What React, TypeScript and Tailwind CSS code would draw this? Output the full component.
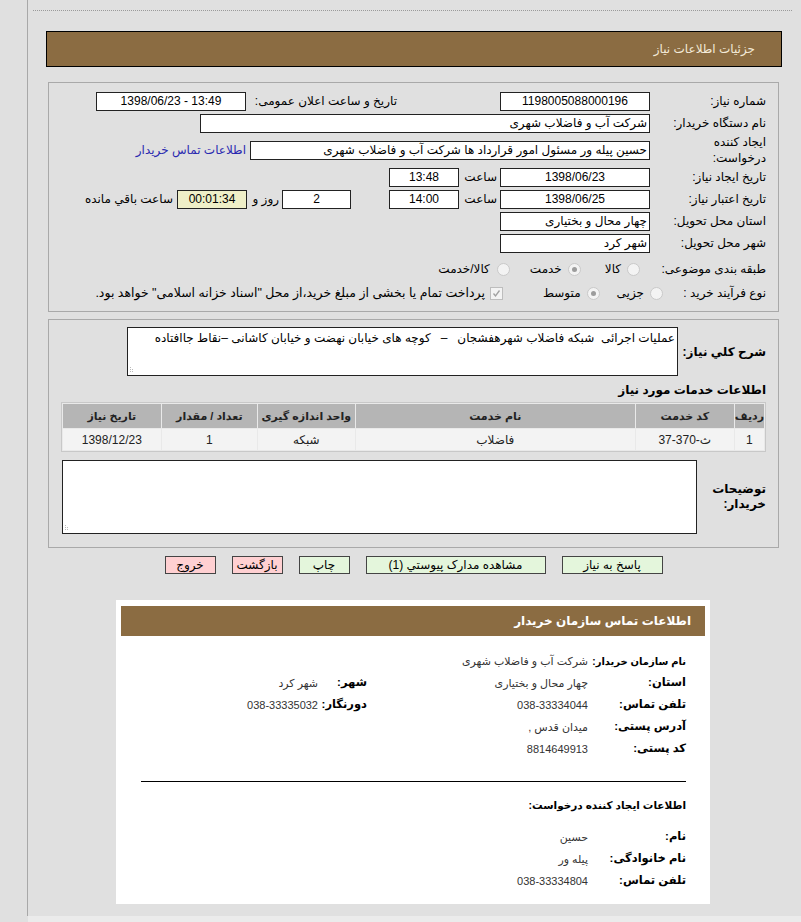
import React from "react";

const font = "font-['Liberation_Sans','DejaVu_Sans',sans-serif]";

function Box({ w, children, center, ltr, bg }: { w: string; children?: React.ReactNode; center?: boolean; ltr?: boolean; bg?: string }) {
  return (
    <div
      dir={ltr ? "ltr" : undefined}
      className={`${w} h-[19px] shrink-0 border border-[#222] ${bg ?? "bg-white"} px-[2px] text-[12px] leading-[17px] text-black whitespace-nowrap overflow-hidden ${center ? "text-center" : "text-right"}`}
    >
      {children}
    </div>
  );
}

function Radio({ checked }: { checked?: boolean }) {
  return (
    <span className="flex h-[13px] w-[13px] shrink-0 items-center justify-center rounded-full border border-[#c9c9c9] bg-[#f3f3f3]">
      {checked && <span className="h-[5px] w-[5px] rounded-full bg-[#9c9c9c]" />}
    </span>
  );
}

function Grip() {
  return (
    <svg className="absolute bottom-[2px] left-[2px]" width="6" height="6" viewBox="0 0 6 6">
      <rect x="0" y="4" width="1" height="1" fill="#bbb" />
      <rect x="2" y="4" width="1" height="1" fill="#bbb" />
      <rect x="0" y="2" width="1" height="1" fill="#bbb" />
      <rect x="2" y="2" width="1" height="1" fill="#bbb" />
      <rect x="0" y="0" width="1" height="1" fill="#bbb" />
    </svg>
  );
}

function Label({ w, children, bold }: { w: string; children: React.ReactNode; bold?: boolean }) {
  return <div className={`${w} shrink-0 text-right text-[12px] text-black ${bold ? "font-bold" : ""}`}>{children}</div>;
}

function InfoRow({ label, value, label2, value2, small }: { label: string; value: string; label2?: string; value2?: string; small?: boolean }) {
  return (
    <div className="flex h-[22px] items-center whitespace-nowrap">
      <div className={`w-[98px] shrink-0 ${small ? "text-[10px]" : "text-[11.5px]"} font-bold text-black`}>{label}</div>
      <div className="w-[221px] shrink-0 text-[11px] text-[#333]">{value}</div>
      {label2 && <div className="w-[49px] shrink-0 text-[11.5px] font-bold text-black">{label2}</div>}
      {value2 && <div className="text-[11px] text-[#333]">{value2}</div>}
    </div>
  );
}

export default function App() {
  const cols = [
    { t: "ردیف", w: "w-[28px]" },
    { t: "کد خدمت", w: "w-[98px]" },
    { t: "نام خدمت", w: "w-[279px]" },
    { t: "واحد اندازه گیری", w: "w-[97px]" },
    { t: "تعداد / مقدار", w: "w-[95px]" },
    { t: "تاریخ نیاز", w: "w-[98px]" },
  ];
  const row = ["1", "ث-370-37", "فاضلاب", "شبکه", "1", "1398/12/23"];

  return (
    <div dir="rtl" className={`${font} min-h-[922px] w-[801px] bg-[#e0e0e0] text-black`}>
      <div className="ml-[27px] h-[916px] border-l border-[#a8a8a8]">
        <div className="h-[10px]" />
        <div className="mr-[9px] ml-[5px] border-t border-dotted border-[#9a9a9a]" />

        {/* page header */}
        <div className="mt-[20px] mr-[19px] ml-[18px] flex h-[36px] items-center border border-black bg-[#8b6c42] pr-[26px] text-[12px] text-[#f3ead8]">
          جزئیات اطلاعات نیاز
        </div>

        {/* main form */}
        <div className="mt-[15px] mr-[22px] ml-[20px] border border-[#a9a9a9] pt-[7px] pb-[6px] pr-[12px]">
          <div className="flex h-[22px] items-center">
            <Label w="w-[116px]">شماره نیاز:</Label>
            <Box w="w-[150px]" center>1198005088000196</Box>
            <div className="w-[103px] shrink-0" />
            <Label w="w-[151px]">تاریخ و ساعت اعلان عمومی:</Label>
            <Box w="w-[150px]" center ltr>1398/06/23 - 13:49</Box>
          </div>
          <div className="flex h-[22px] items-center">
            <Label w="w-[116px]">نام دستگاه خریدار:</Label>
            <Box w="w-[450px]">شرکت آب و فاضلاب شهری</Box>
          </div>
          <div className="flex h-[32px] items-center">
            <Label w="w-[116px]">
              <div className="leading-[16px]">ایجاد کننده</div>
              <div className="leading-[16px]">درخواست:</div>
            </Label>
            <Box w="w-[400px]">حسین پیله ور مسئول امور قرارداد ها شرکت آب و فاضلاب شهری</Box>
            <span className="mr-[4px] text-[12px] text-[#2a2ab0]">اطلاعات تماس خریدار</span>
          </div>
          <div className="flex h-[22px] items-center">
            <Label w="w-[116px]">تاریخ ایجاد نیاز:</Label>
            <Box w="w-[150px]" center>1398/06/23</Box>
            <div className="w-[41px] shrink-0 pr-[3px] text-[12px]">ساعت</div>
            <Box w="w-[70px]" center>13:48</Box>
          </div>
          <div className="flex h-[22px] items-center">
            <Label w="w-[116px]">تاریخ اعتبار نیاز:</Label>
            <Box w="w-[150px]" center>1398/06/25</Box>
            <div className="w-[41px] shrink-0 pr-[3px] text-[12px]">ساعت</div>
            <Box w="w-[70px]" center>14:00</Box>
            <div className="w-[38px] shrink-0" />
            <Box w="w-[69px]" center>2</Box>
            <div className="w-[35px] shrink-0 pr-[3px] text-[12px]">روز و</div>
            <Box w="w-[70px]" center bg="bg-[#efefc8]">00:01:34</Box>
            <span className="mr-[4px] text-[12px]">ساعت باقي مانده</span>
          </div>
          <div className="flex h-[22px] items-center">
            <Label w="w-[116px]">استان محل تحویل:</Label>
            <Box w="w-[150px]">چهار محال و بختیاری</Box>
          </div>
          <div className="flex h-[22px] items-center">
            <Label w="w-[116px]">شهر محل تحویل:</Label>
            <Box w="w-[150px]">شهر کرد</Box>
          </div>
          <div className="mt-[3px] flex h-[24px] items-center text-[12px]">
            <Label w="w-[126px]">طبقه بندی موضوعی:</Label>
            <Radio />
            <span className="mr-[6px]">کالا</span>
            <span className="mr-[24px]" />
            <Radio checked />
            <span className="mr-[6px]">خدمت</span>
            <span className="mr-[20px]" />
            <Radio />
            <span className="mr-[7px]">کالا/خدمت</span>
          </div>
          <div className="flex h-[24px] items-center text-[12px]">
            <Label w="w-[103px]">نوع فرآیند خرید :</Label>
            <Radio />
            <span className="mr-[6px]">جزیی</span>
            <span className="mr-[17px]" />
            <Radio checked />
            <span className="mr-[6px]">متوسط</span>
            <span className="mr-[40px]" />
            <span className="flex h-[13px] w-[13px] shrink-0 items-center justify-center border border-[#bdbdbd] bg-[#f3f3f3]">
              <svg width="9" height="9" viewBox="0 0 9 9">
                <path d="M1.5 4.5 L3.5 7 L7.5 1.5" stroke="#a0a0a0" strokeWidth="1.3" fill="none" />
              </svg>
            </span>
            <span className="mr-[5px] text-[12.5px]">پرداخت تمام یا بخشی از مبلغ خرید،از محل "اسناد خزانه اسلامی" خواهد بود.</span>
          </div>
        </div>

        {/* description panel */}
        <div className="mt-[7px] mr-[22px] ml-[20px] border border-[#a9a9a9] pt-[7px] pr-[12px] pb-[13px]">
          <div className="flex items-center">
            <div className="w-[88px] shrink-0 whitespace-nowrap text-[12px] font-bold">شرح کلي نياز:</div>
            <div className="relative h-[49px] w-[551px] border border-[#222] bg-white px-[2px] pt-[2px] text-[12px] leading-[16px] whitespace-nowrap">
              عملیات اجرائی&nbsp; شبکه فاضلاب شهرهفشجان &nbsp; – &nbsp; کوچه های خیابان نهضت و خیابان کاشانی –نقاط جاافتاده
              <Grip />
            </div>
          </div>
          <div className="mt-[4px] h-[20px] text-[12px] font-bold leading-[20px]">اطلاعات خدمات مورد نیاز</div>
          <table className="mt-[2px] border-separate border-spacing-[1px] border border-[#c8c8c8] bg-[#e9e9e9] text-[11px]">
            <thead>
              <tr>
                {cols.map((c) => (
                  <th key={c.t} className={`${c.w} h-[24px] bg-[#b5b5b5] p-0 text-center font-bold text-[#222]`}>
                    {c.t}
                  </th>
                ))}
              </tr>
            </thead>
            <tbody>
              <tr>
                {row.map((v, i) => (
                  <td key={i} className="h-[21px] bg-[#f3f3f3] p-0 text-center text-[12px] text-[#222]">
                    {v}
                  </td>
                ))}
              </tr>
            </tbody>
          </table>
          <div className="mt-[8px] flex items-center">
            <div className="w-[69px] shrink-0 text-[12px] font-bold leading-[15px]">
              <div>توضیحات</div>
              <div>خریدار:</div>
            </div>
            <div className="relative h-[74px] w-[635px] border border-[#222] bg-white">
              <Grip />
            </div>
          </div>
        </div>

        {/* buttons */}
        <div className="mt-[8px] mr-[22px] ml-[20px] flex justify-center gap-[16px] text-[12px]">
          <div className="h-[18px] w-[101px] border border-[#444] bg-[#e4f6dc] text-center leading-[16px]">پاسخ به نیاز</div>
          <div className="h-[18px] w-[180px] border border-[#444] bg-[#e4f6dc] text-center leading-[16px]">مشاهده مدارک پیوستي (1)</div>
          <div className="h-[18px] w-[51px] border border-[#444] bg-[#e4f6dc] text-center leading-[16px]">چاپ</div>
          <div className="h-[18px] w-[51px] border border-[#444] bg-[#ffd0d2] text-center leading-[16px]">بازگشت</div>
          <div className="h-[18px] w-[51px] border border-[#444] bg-[#ffd0d2] text-center leading-[16px]">خروج</div>
        </div>

        {/* contact card */}
        <div className="mt-[26px] mr-[91px] ml-[88px] bg-white px-[5px] pt-[6px] pb-[12px]">
          <div className="flex h-[30px] items-center bg-[#8b6c42] pr-[14px] text-[12px] font-bold text-white">
            اطلاعات تماس سازمان خریدار
          </div>
          <div className="mt-[14px] pr-[19px] pl-[20px]">
            <InfoRow label="نام سازمان خریدار:" value="شرکت آب و فاضلاب شهری" small />
            <InfoRow label="استان:" value="چهار محال و بختیاری" label2="شهر:" value2="شهر کرد" />
            <InfoRow label="تلفن تماس:" value="038-33334044" label2="دورنگار:" value2="038-33335032" />
            <InfoRow label="آدرس پستی:" value="میدان قدس ," />
            <InfoRow label="کد پستی:" value="8814649913" />
            <div className="mt-[21px] border-t border-black" />
            <div className="mt-[14px] h-[18px] text-[10.5px] font-bold leading-[18px]">اطلاعات ایجاد کننده درخواست:</div>
            <div className="mt-[12px]">
              <InfoRow label="نام:" value="حسین" />
              <InfoRow label="نام خانوادگی:" value="پیله ور" />
              <InfoRow label="تلفن تماس:" value="038-33334804" />
            </div>
          </div>
        </div>
      </div>
      <div className="ml-[28px] h-[6px] bg-[#ebebeb]" />
    </div>
  );
}
